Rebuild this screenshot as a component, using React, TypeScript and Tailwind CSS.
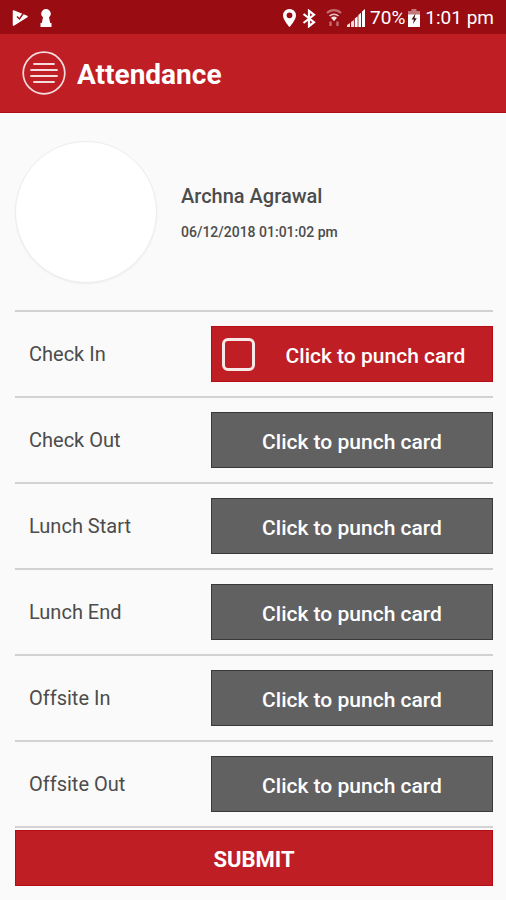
import { useState } from "react"

// Rows of the attendance form, in display order
const punches = [
  { id: "check-in", label: "Check In", active: true },
  { id: "check-out", label: "Check Out", active: false },
  { id: "lunch-start", label: "Lunch Start", active: false },
  { id: "lunch-end", label: "Lunch End", active: false },
  { id: "offsite-in", label: "Offsite In", active: false },
  { id: "offsite-out", label: "Offsite Out", active: false },
]

function StatusBar() {
  return (
    <div className="flex h-[34px] items-center justify-between bg-[#980c12] px-3 pt-[2px] text-white">
      <div className="flex items-center gap-3">
        {/* Play notification */}
        <svg className="h-[18px] w-4" viewBox="0 0 16 18" aria-hidden="true">
          <path d="M1.500 2L15 7.500 1.500 16z" fill="#fff" strokeLinejoin="round" stroke="#fff" strokeWidth="1.500" />
          <path d="M5 7.500l2.500 2.500 4-6" fill="none" stroke="#980c12" strokeWidth="1.4" />
        </svg>
        {/* Keyhole notification */}
        <svg className="h-5 w-3" viewBox="0 0 12 20" aria-hidden="true">
          <path d="M6 1a4.800 4.800 0 0 0-4.800 4.800c0 1.700.8 2.700 1.800 3.500L1.800 15H.5v4h11v-4h-1.300L9 9.300c1-.8 1.800-1.800 1.800-3.500A4.800 4.800 0 0 0 6 1z" fill="#fff" />
        </svg>
      </div>

      <div className="flex items-center">
        {/* Location */}
        <svg className="h-[18px] w-[13px]" viewBox="0 0 13 18" aria-hidden="true">
          <path d="M6.5 0A6.4 6.4 0 0 0 0 6.4C0 10.8 6.5 18 6.5 18S13 10.8 13 6.4A6.4 6.4 0 0 0 6.5 0zm0 9.200a2.900 2.900 0 1 1 0-5.800 2.900 2.900 0 0 1 0 5.800z" fill="#fff" />
        </svg>
        {/* Bluetooth */}
        <svg className="ml-[6px] h-[19px] w-[14px]" viewBox="0 0 14 19" aria-hidden="true">
          <path d="M1.500 5L12 13.200l-5 4V1.800l5 4L1.500 14" fill="none" stroke="#fff" strokeWidth="2.200" />
        </svg>
        {/* Wifi */}
        <svg className="ml-[10px] h-[18px] w-[16px]" viewBox="0 0 16 18" aria-hidden="true">
          <path d="M1 4a10 10 0 0 1 14 0" fill="none" stroke="#fff" strokeOpacity="0.4" strokeWidth="2.200" />
          <path d="M3.5 7a6.5 6.5 0 0 1 9 0" fill="none" stroke="#fff" strokeOpacity="0.75" strokeWidth="1.6" />
          <path d="M5 8.800a4.500 4.500 0 0 1 6 0L8 12.200z" fill="#fff" fillOpacity="0.9" />
          <path d="M4.500 12.500v4.500M11.500 12.500v4.500" fill="none" stroke="#fff" strokeOpacity="0.4" strokeWidth="2.400" />
        </svg>
        {/* Signal */}
        <svg className="ml-[5px] h-[18px] w-[18px]" viewBox="0 0 18 18" aria-hidden="true">
          <path d="M0 16l3-2v4H0zM4 13l3-2v7H4z" fill="#fff" fillOpacity="0.85" />
          <path d="M7.800 9.500l2.800-2.200V18H7.800zM11.400 6l2.600-2.200V18h-2.600zM15 2.500L18 0v18h-3z" fill="#fff" />
        </svg>
        <span className="ml-[5px] text-[19px] leading-6">70%</span>
        {/* Battery */}
        <svg className="ml-[3px] h-[18px] w-3" viewBox="0 0 12 18" aria-hidden="true">
          <path d="M3.500 0h5v2H12v4H0V2h3.500z" fill="#fff" fillOpacity="0.45" />
          <path d="M0 5.500h12V18H0z" fill="#fff" />
          <path d="M7.500 4.500L3.500 10.500h2.400L5 15 8.800 9.200H6.500z" fill="#3d1013" />
        </svg>
        <span className="ml-[5px] text-[19px] leading-6">1:01 pm</span>
      </div>
    </div>
  )
}

export default function App() {
  const [punched, setPunched] = useState(false)

  return (
    <div className="min-h-screen bg-[#fafafa] font-['Roboto',sans-serif]">
      <StatusBar />

      <header className="flex h-[79px] items-center gap-[11px] border-b border-[#ae0f15] bg-[#be1e24] pl-[22px]">
        <button type="button" aria-label="Menu" className="text-white">
          <svg className="h-11 w-11" viewBox="0 0 44 44" fill="none" stroke="currentColor" strokeOpacity="0.85">
            <circle cx="22" cy="22" r="20.8" strokeWidth="1.7" />
            <path d="M12 13h20M9 19h26M9 25h26M12 31h20" strokeWidth="1.8" strokeLinecap="round" />
          </svg>
        </button>
        <h1 className="pt-1 text-[28px] font-bold leading-8 text-white">Attendance</h1>
      </header>

      <main className="pl-[15px] pr-[13px]">
        {/* Employee details */}
        <section className="flex items-center gap-6 pb-[27px] pt-7">
          <div className="size-[142px] shrink-0 rounded-full border border-[#ededed] bg-white shadow-xs" />
          <div>
            <h2 className="text-[20px] font-medium leading-6 text-[#4c4c4c]">Archna Agrawal</h2>
            <p className="mt-4 text-[14px] font-medium leading-4 text-[#4c4c4c]">06/12/2018 01:01:02 pm</p>
          </div>
        </section>

        <form onSubmit={(e) => e.preventDefault()}>
          <div className="border-b-2 border-[#d2d2d2]">
            {punches.map((punch) => (
              <div key={punch.id} className="flex items-center border-t-2 border-[#d2d2d2] py-[14px]">
                <span id={punch.id} className="w-[41%] pl-[14px] text-[20px] leading-6 text-[#4c4c4c]">
                  {punch.label}
                </span>
                {punch.active ? (
                  <label className="flex h-14 flex-1 cursor-pointer items-center border border-[#b60c12] bg-[#be1e24] pl-[10px] text-white">
                    <input
                      type="checkbox"
                      aria-describedby={punch.id}
                      checked={punched}
                      onChange={(e) => setPunched(e.target.checked)}
                      className="size-[33px] appearance-none rounded-md border-3 border-white/90 checked:bg-white/40"
                    />
                    <span className="flex-1 pl-1 pt-1 text-center text-[21px] font-medium leading-7">Click to punch card</span>
                  </label>
                ) : (
                  <button
                    type="button"
                    aria-describedby={punch.id}
                    className="h-14 flex-1 border border-[#3a3a3a] bg-[#616161] pt-1 text-[21px] font-medium leading-7 text-white"
                  >
                    Click to punch card
                  </button>
                )}
              </div>
            ))}
          </div>

          <button
            type="submit"
            className="mt-[2px] h-14 w-full border border-[#b60c12] bg-[#be1e24] pt-1 text-[22px] font-bold leading-7 text-white"
          >
            SUBMIT
          </button>
        </form>
      </main>
    </div>
  )
}
